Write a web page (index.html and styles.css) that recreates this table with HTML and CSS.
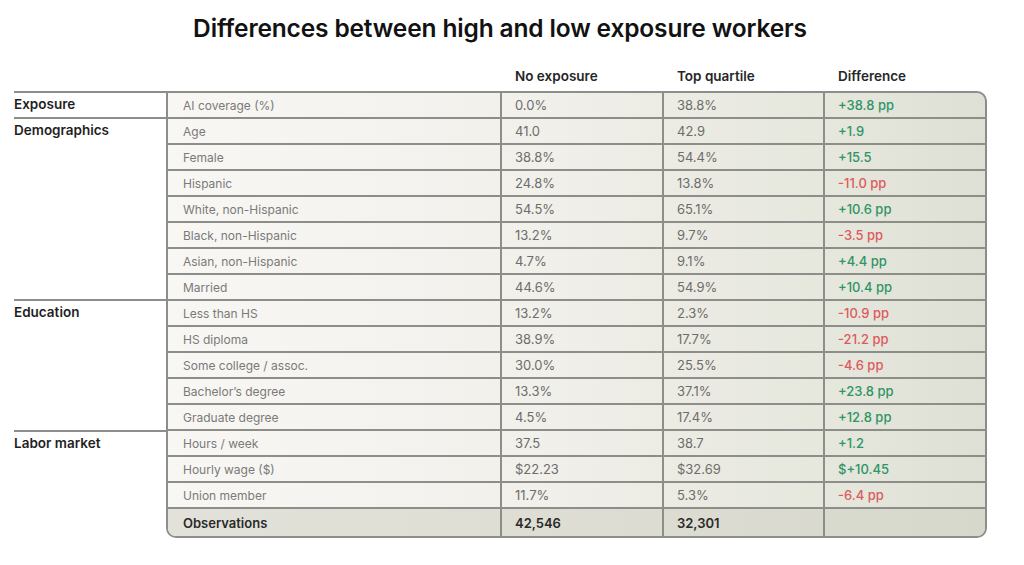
FILE: index.html
```html
<!DOCTYPE html>
<html lang="en">
<head>
<meta charset="utf-8">
<title>Differences between high and low exposure workers</title>
<link rel="stylesheet" href="styles.css">
</head>
<body>
<div class="page">
  <h1 class="title">Differences between high and low exposure workers</h1>
  <div class="head">
    <div></div>
    <div></div>
    <div class="hcell">No exposure</div>
    <div class="hcell">Top quartile</div>
    <div class="hcell">Difference</div>
  </div>
  <div class="body">
    <div class="groups">
      <div class="group g1">Exposure</div>
      <div class="group g7">Demographics</div>
      <div class="group g5">Education</div>
      <div class="group g3">Labor market</div>
    </div>
    <div class="box">
      <div class="row"><div class="c lab">AI coverage (%)</div><div class="c v">0.0%</div><div class="c v">38.8%</div><div class="c pos">+38.8 pp</div></div>
      <div class="row"><div class="c lab">Age</div><div class="c v">41.0</div><div class="c v">42.9</div><div class="c pos">+1.9</div></div>
      <div class="row"><div class="c lab">Female</div><div class="c v">38.8%</div><div class="c v">54.4%</div><div class="c pos">+15.5</div></div>
      <div class="row"><div class="c lab">Hispanic</div><div class="c v">24.8%</div><div class="c v">13.8%</div><div class="c neg">-11.0 pp</div></div>
      <div class="row"><div class="c lab">White, non-Hispanic</div><div class="c v">54.5%</div><div class="c v">65.1%</div><div class="c pos">+10.6 pp</div></div>
      <div class="row"><div class="c lab">Black, non-Hispanic</div><div class="c v">13.2%</div><div class="c v">9.7%</div><div class="c neg">-3.5 pp</div></div>
      <div class="row"><div class="c lab">Asian, non-Hispanic</div><div class="c v">4.7%</div><div class="c v">9.1%</div><div class="c pos">+4.4 pp</div></div>
      <div class="row"><div class="c lab">Married</div><div class="c v">44.6%</div><div class="c v">54.9%</div><div class="c pos">+10.4 pp</div></div>
      <div class="row"><div class="c lab">Less than HS</div><div class="c v">13.2%</div><div class="c v">2.3%</div><div class="c neg">-10.9 pp</div></div>
      <div class="row"><div class="c lab">HS diploma</div><div class="c v">38.9%</div><div class="c v">17.7%</div><div class="c neg">-21.2 pp</div></div>
      <div class="row"><div class="c lab">Some college / assoc.</div><div class="c v">30.0%</div><div class="c v">25.5%</div><div class="c neg">-4.6 pp</div></div>
      <div class="row"><div class="c lab">Bachelor’s degree</div><div class="c v">13.3%</div><div class="c v">37.1%</div><div class="c pos">+23.8 pp</div></div>
      <div class="row"><div class="c lab">Graduate degree</div><div class="c v">4.5%</div><div class="c v">17.4%</div><div class="c pos">+12.8 pp</div></div>
      <div class="row"><div class="c lab">Hours / week</div><div class="c v">37.5</div><div class="c v">38.7</div><div class="c pos">+1.2</div></div>
      <div class="row"><div class="c lab">Hourly wage ($)</div><div class="c v">$22.23</div><div class="c v">$32.69</div><div class="c pos">$+10.45</div></div>
      <div class="row"><div class="c lab">Union member</div><div class="c v">11.7%</div><div class="c v">5.3%</div><div class="c neg">-6.4 pp</div></div>
      <div class="row obs"><div class="c">Observations</div><div class="c">42,546</div><div class="c">32,301</div><div class="c"></div></div>
    </div>
  </div>
</div>
</body>
</html>
```

FILE: styles.css
```css
* { box-sizing: border-box; }
html, body { margin: 0; padding: 0; background: #ffffff; }
body { font-family: Inter, "Open Sans", "Liberation Sans", sans-serif; }

.page {
  width: 1024px;
  height: 565px;
  padding: 13px 0 0 14px;
}

.title {
  margin: 0 0 0 -14px;
  text-align: center;
  font-size: 24.5px;
  font-weight: 600;
  letter-spacing: -0.15px;
  color: #121212;
  line-height: 30px;
  width: 1000px;
}

.head {
  display: grid;
  grid-template-columns: 152px 334px 162px 161px 162px;
  margin-top: 25px;
  height: 23px;
}
.hcell {
  padding-left: 15px;
  font-size: 13.5px;
  font-weight: 600;
  color: #262626;
  line-height: 16px;
}

.body {
  display: grid;
  grid-template-columns: 152px 821px;
}

.groups { display: flex; flex-direction: column; }
.group {
  border-top: 2px solid #8d8d89;
  font-size: 13.5px;
  font-weight: 600;
  color: #1f1f1f;
  padding-top: 3px;
  line-height: 16px;
}
.g1 { height: 26px; }
.g7 { height: 182px; }
.g5 { height: 131px; }
.g3 { height: 78px; }

.box {
  border: 2px solid #8d8d89;
  border-radius: 0 10px 10px 10px;
  overflow: hidden;
  background: linear-gradient(90deg, #f8f7f4 0%, #f1f0eb 45%, #e6e7dd 80%, #dfe0d5 100%);
}

.row {
  display: grid;
  grid-template-columns: 332px 162px 161px 162px;
  height: 26px;
  border-bottom: 2px solid #8d8d89;
  align-items: center;
}
.c {
  height: 100%;
  display: flex;
  align-items: center;
  padding-left: 15px;
  font-size: 12.5px;
  color: #737373;
}
.c + .c { border-left: 2px solid #8d8d89; padding-left: 13px; }
.lab { font-size: 12px; color: #7a7a78; }
.v { font-size: 13px; color: #6d6d6b; }
.pos { font-size: 13px; color: #2f9467; font-weight: 500; }
.neg { font-size: 13px; color: #de5a5c; font-weight: 500; }

.obs {
  height: 27px;
  border-bottom: none;
  background: linear-gradient(90deg, #e3e2da 0%, #dcdcd2 60%, #d7d8cc 100%);
}
.obs .c { font-size: 13px; font-weight: 600; color: #2a2a2a; }
```
